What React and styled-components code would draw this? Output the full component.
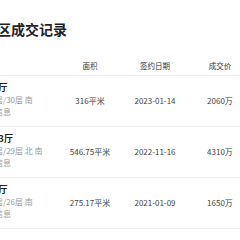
import styled, { createGlobalStyle } from 'styled-components';

const GlobalStyle = createGlobalStyle`
    html, body {
        margin: 0;
        padding: 0;
        background: #ffffff;
        overflow: hidden;
    }
    body {
        font-family: "Noto Sans CJK SC", "Noto Sans", sans-serif;
        color: #333333;
    }
`;

const records = [
    { layout: '3室2厅', floor: '中楼层/30层 南', area: '316平米', date: '2023-01-14', price: '2060万' },
    { layout: '10室3厅', floor: '高楼层/29层 北 南', area: '546.75平米', date: '2022-11-16', price: '4310万' },
    { layout: '4室2厅', floor: '低楼层/26层 南', area: '275.17平米', date: '2021-01-09', price: '1650万' },
];

function App() {
    return (
        <>
            <GlobalStyle />
            <Page>
                <Title>小区成交记录</Title>
                <Table>
                    <HeadRow>
                        <HeadCell $first></HeadCell>
                        <HeadCell>面积</HeadCell>
                        <HeadCell>签约日期</HeadCell>
                        <HeadCell>成交价</HeadCell>
                    </HeadRow>
                    {records.map((r) => (
                        <Row key={r.date}>
                            <Info>
                                <Layout>{r.layout}</Layout>
                                <Sub>{r.floor}</Sub>
                                <Sub>房源信息</Sub>
                            </Info>
                            <Value>{r.area}</Value>
                            <Value>{r.date}</Value>
                            <Value>{r.price}</Value>
                        </Row>
                    ))}
                </Table>
            </Page>
        </>
    );
}

export default App;

const Page = styled.div`
    width: 274px;
    margin-left: -21px;
`;

const Title = styled.h2`
    margin: 19px 0 0 4px;
    font-size: 14px;
    line-height: 20px;
    font-weight: 700;
    color: #1f2329;
`;

const Table = styled.div`
    margin-top: 18px;
    display: flex;
    flex-direction: column;
`;

const HeadRow = styled.div`
    display: grid;
    grid-template-columns: 78.5px 65px 65px 65px;
    height: 18px;
    align-items: center;
    border-bottom: 1px solid #eeeeee;
`;

const HeadCell = styled.div`
    text-align: ${(p) => (p.$first ? 'left' : 'center')};
    font-size: 7.5px;
    line-height: 10px;
    color: #333333;
`;

const Row = styled.div`
    display: grid;
    grid-template-columns: 78.5px 65px 65px 65px;
    height: 50px;
    align-items: center;
    border-bottom: 1px solid #f0f0f0;
`;

const Info = styled.div`
    display: flex;
    flex-direction: column;
    white-space: nowrap;
    padding-bottom: 2px;
`;

const Layout = styled.div`
    font-size: 9px;
    line-height: 12px;
    font-weight: 700;
    color: #222222;
`;

const Sub = styled.div`
    font-size: 8px;
    line-height: 12px;
    color: #9a9a9a;
`;

const Value = styled.div`
    text-align: center;
    font-size: 8px;
    line-height: 12px;
    color: #444444;
    white-space: nowrap;
`;
